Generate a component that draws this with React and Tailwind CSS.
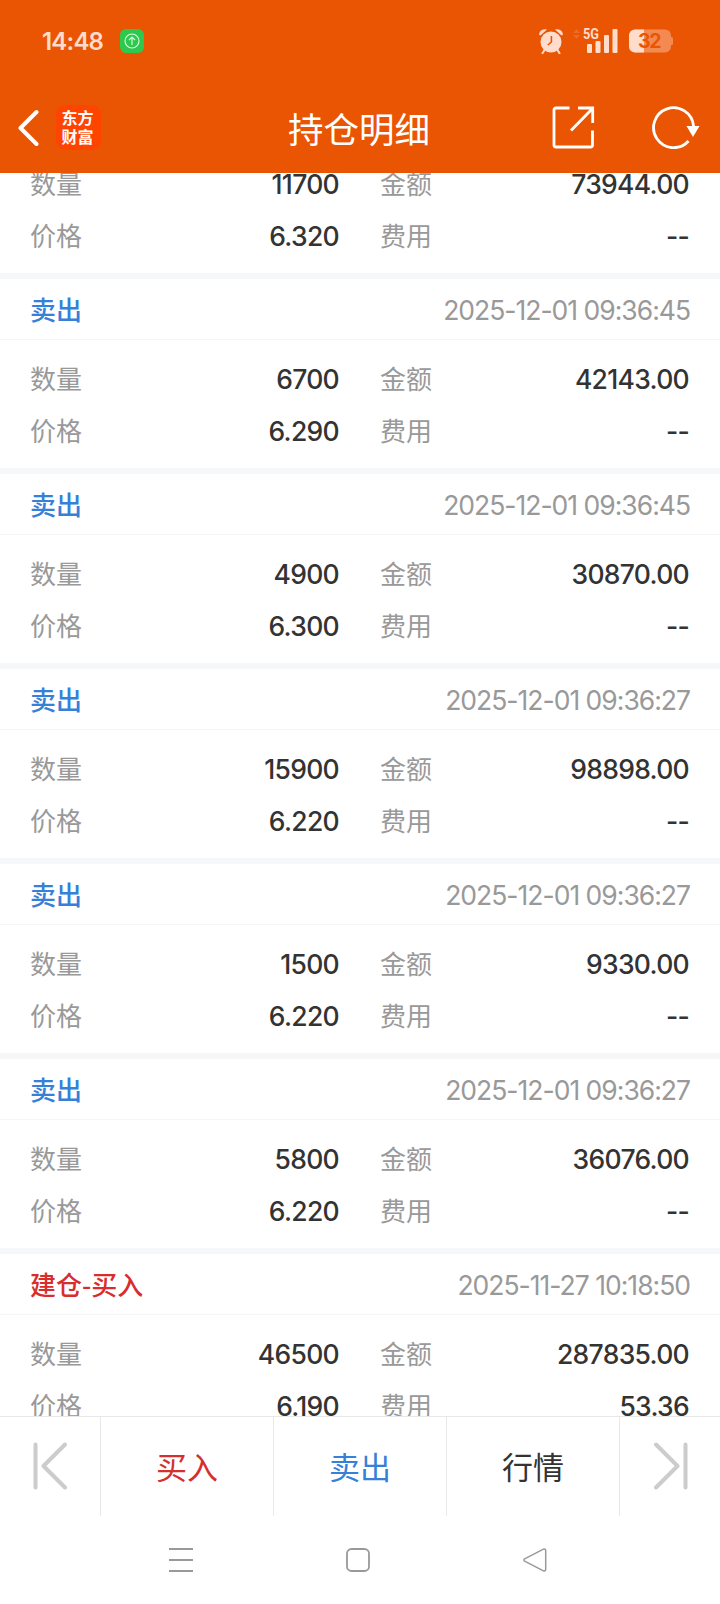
const trades = [
  { type: "卖出", time: "", count: "11700", amount: "73944.00", price: "6.320", fee: "--" },
  { type: "卖出", time: "2025-12-01 09:36:45", count: "6700", amount: "42143.00", price: "6.290", fee: "--" },
  { type: "卖出", time: "2025-12-01 09:36:45", count: "4900", amount: "30870.00", price: "6.300", fee: "--" },
  { type: "卖出", time: "2025-12-01 09:36:27", count: "15900", amount: "98898.00", price: "6.220", fee: "--" },
  { type: "卖出", time: "2025-12-01 09:36:27", count: "1500", amount: "9330.00", price: "6.220", fee: "--" },
  { type: "卖出", time: "2025-12-01 09:36:27", count: "5800", amount: "36076.00", price: "6.220", fee: "--" },
  { type: "建仓-买入", time: "2025-11-27 10:18:50", count: "46500", amount: "287835.00", price: "6.190", fee: "53.36" },
];

const StatusBar = () => (
  <div className="flex h-[82px] items-center justify-between pl-[42px] pr-[47px]">
    <div className="flex items-center">
      <span className="w-[78px] pt-px font-['Inter'] text-2xl font-semibold tracking-[-0.8px] text-[#ffdccb]">
        14:48
      </span>
      <svg width="24" height="24" viewBox="0 0 24 24" fill="none" stroke="#d8ffe0" strokeWidth="1.1">
        <rect width="24" height="24" rx="6" fill="#2dc84d" stroke="none" />
        <circle cx="12" cy="12" r="7" />
        <path d="M12 16V8M9 11l3-3 3 3" />
      </svg>
    </div>
    <div className="flex items-center">
      {/* alarm */}
      <svg width="26" height="26" viewBox="0 0 26 26" fill="#ffdccb">
        <circle cx="13" cy="14" r="10.5" />
        <path d="M1 6.5A6 6 0 0 1 9 1.6L2.4 7.6zM25 6.5a6 6 0 0 0-8-4.9l6.6 6z" />
        <path d="M6.5 22l-2 3.2M19.5 22l2 3.2" stroke="#ffdccb" strokeWidth="2" strokeLinecap="round" />
        <path d="M13.4 8v6l-3.6 3" fill="none" stroke="#ea5504" strokeWidth="1.6" />
      </svg>
      {/* mobile signal */}
      <svg className="ml-[9px] overflow-visible" width="45" height="26" viewBox="0 0 45 26" fill="#ffdccb">
        <path d="M0 5l3.500-4L7 5zM0 7h7l-3.500 4z" fill="#ee6a2a" />
        <text x="10" y="11" fontFamily="Roboto" fontSize="14" fontWeight="700" textLength="16" lengthAdjust="spacingAndGlyphs">
          5G
        </text>
        <rect x="14" y="16" width="5" height="9" rx="1" />
        <rect x="22.500" y="13" width="5" height="12" rx="1" />
        <rect x="31" y="7" width="5" height="18" rx="1" />
        <rect x="39.500" y="1" width="5" height="24" rx="1" />
      </svg>
      {/* battery */}
      <svg className="ml-2.5" width="45" height="24" viewBox="0 0 45 24">
        <rect x="1" y="0.5" width="42" height="23" rx="6" fill="#f38a52" />
        <path d="M43 8h.5a1.500 1.500 0 0 1 1.500 1.500v5a1.500 1.500 0 0 1-1.500 1.500H43z" fill="#f38a52" />
        <path d="M16 .5H7a6 6 0 0 0-6 6v11a6 6 0 0 0 6 6h9z" fill="#ffdccb" />
        <text x="10" y="19" fontFamily="Inter" fontSize="19.5" fontWeight="700" fill="#ea5504" textLength="23.5">
          32
        </text>
      </svg>
    </div>
  </div>
);

const TitleBar = () => (
  <div className="grid h-[91px] grid-cols-3 items-center pl-4 pr-5">
    <div className="flex items-center gap-[17px]">
      <svg width="23" height="38" viewBox="0 0 23 38" fill="none" stroke="#fff" strokeWidth="4" strokeLinecap="round" strokeLinejoin="round">
        <path d="M20.500 3L4.500 19l16 16" />
      </svg>
      <div className="flex h-[45px] w-[45px] flex-col items-center justify-center rounded-[9px] bg-[#ff4400] pb-0.5 pr-0.5 text-base leading-[19px] font-bold text-white">
        <span>东方</span>
        <span>财富</span>
      </div>
    </div>
    <h1 className="pl-0.5 text-center text-[35.5px] leading-none text-white">持仓明细</h1>
    <div className="flex items-center justify-end gap-[57px]">
      <svg width="43" height="43" viewBox="0 0 43 43" fill="none" stroke="#fff" strokeWidth="2.8">
        <path d="M17.500 2H4a2 2 0 0 0-2 2V39a2 2 0 0 0 2 2h34.500a2 2 0 0 0 2-2V24.500" />
        <path d="M26 2h14.700V17M40 3L19 24.500" />
      </svg>
      <svg width="48" height="43" viewBox="0 0 48 43" fill="none">
        <path d="M41.500 20A20 20 0 1 0 36.500 35" stroke="#fff" strokeWidth="2.8" />
        <path d="M34.500 20H47.500L41 31z" fill="#fff" />
      </svg>
    </div>
  </div>
);

const Field = ({ label, value }) => (
  <div className="flex h-[52px] items-center justify-between">
    <span className="pb-[3px] text-[26px] text-[#999]">{label}</span>
    <span className="pt-[2px] pr-px font-['Inter'] text-[26.5px] font-medium tracking-[-0.7px] text-[#333]">
      {value}
    </span>
  </div>
);

const Trade = ({ trade }) => (
  <section className="border-b-[6px] border-[#f6f7f9]">
    <div className="flex h-[61px] items-center justify-between border-b border-[#f5f6f7] px-[30px]">
      <span
        className={`pb-px text-[26px] font-medium ${
          trade.type === "卖出" ? "text-[#3680d8]" : "text-[#d92d2d]"
        }`}
      >
        {trade.type}
      </span>
      <span className="pt-[3px] font-['Inter'] text-[26.5px] tracking-[-1px] text-[#999]">{trade.time}</span>
    </div>
    <div className="grid h-32 grid-cols-2 content-start gap-x-10 px-[30px] pt-[13px]">
      <Field label="数量" value={trade.count} />
      <Field label="金额" value={trade.amount} />
      <Field label="价格" value={trade.price} />
      <Field label="费用" value={trade.fee} />
    </div>
  </section>
);

const ActionBar = () => (
  <div className="flex h-[100px] shrink-0 border-t border-[#e8e8e8] text-[31px]">
    <button className="flex w-[101px] items-center justify-center border-r border-[#e8e8e8] pb-0.5">
      <svg width="34" height="48" viewBox="0 0 34 48" fill="none" stroke="#ccc" strokeWidth="4" strokeLinecap="round" strokeLinejoin="round">
        <path d="M2.500 2.500v43M32 2.500L10.500 24 32 45.500" />
      </svg>
    </button>
    <button className="w-[173px] border-r border-[#e8e8e8] text-[#d62f2f]">买入</button>
    <button className="w-[173px] border-r border-[#e8e8e8] text-[#3680d8]">卖出</button>
    <button className="w-[173px] border-r border-[#e8e8e8] text-[#333]">行情</button>
    <button className="flex flex-1 items-center justify-center pb-0.5 pl-0.5">
      <svg width="34" height="48" viewBox="0 0 34 48" fill="none" stroke="#ccc" strokeWidth="4" strokeLinecap="round" strokeLinejoin="round">
        <path d="M31.500 2.500v43M2 2.500L23.500 24 2 45.500" />
      </svg>
    </button>
  </div>
);

const SystemNav = () => (
  <div className="flex h-[88px] shrink-0 items-center justify-center gap-[153px] pr-[5px]">
    <svg width="24" height="24" viewBox="0 0 24 24" stroke="#999" strokeWidth="1.8">
      <path d="M0 1h24M0 12h24M0 23h24" />
    </svg>
    <svg width="24" height="24" viewBox="0 0 24 24" fill="none" stroke="#999" strokeWidth="1.8">
      <rect x="1" y="1" width="22" height="22" rx="4.5" />
    </svg>
    <svg width="24" height="24" viewBox="0 0 24 24" fill="none" stroke="#999" strokeWidth="1.5" strokeLinejoin="round">
      <path d="M1.600 10.800L20.500 1.200a1.500 1.500 0 0 1 2.200 1.300v19a1.500 1.500 0 0 1-2.200 1.300L1.600 13.200a1.400 1.400 0 0 1 0-2.400z" />
    </svg>
  </div>
);

export default function App() {
  return (
    <div className="flex h-[1604px] w-[720px] flex-col overflow-hidden bg-white font-['Noto_Sans_CJK_SC',sans-serif]">
      <header className="z-10 h-[173px] shrink-0 bg-[#ea5504]">
        <StatusBar />
        <TitleBar />
      </header>
      <main className="min-h-0 flex-1 overflow-hidden">
        {/* list is scrolled part way into the first trade */}
        <div className="-mt-[89px]">
          {trades.map((trade, i) => (
            <Trade key={i} trade={trade} />
          ))}
        </div>
      </main>
      <ActionBar />
      <SystemNav />
    </div>
  );
}
